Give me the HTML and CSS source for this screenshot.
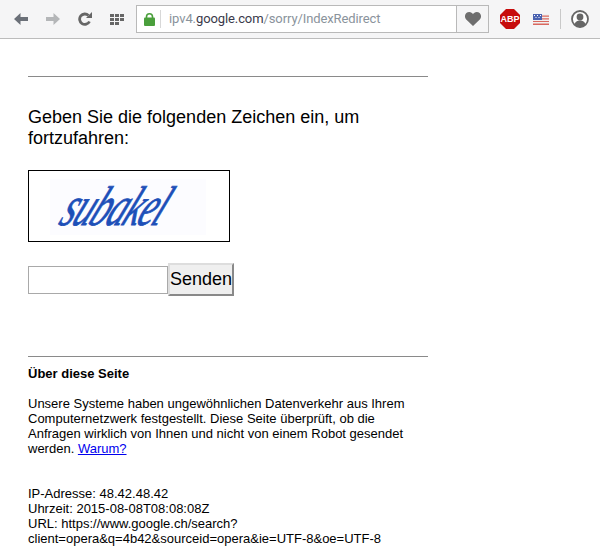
FILE: index.html
```html
<!DOCTYPE html>
<html lang="de">
<head>
  <meta charset="UTF-8">
  <title>Sorry</title>
  <link rel="stylesheet" href="styles.css">
</head>
<body>
  <header class="toolbar">
    <nav class="nav-icons">
      <svg width="14" height="12" viewBox="0 0 14 12"><path d="M6.500 0 0 6l6.500 6V8H14V4H6.500z" fill="#6b7078"/></svg>
      <svg width="14" height="12" viewBox="0 0 14 12"><path d="M7.500 0 14 6l-6.500 6V8H0V4h7.500z" fill="#b4b6b8"/></svg>
      <svg width="14" height="14" viewBox="0 0 14 14"><path d="M11.500 9.500A5.200 5.200 0 1 1 10.500 3.500" fill="none" stroke="#666" stroke-width="2.800"/><path d="M8 6h6V0z" fill="#666"/></svg>
      <svg width="14" height="11" viewBox="0 0 14 11" fill="#666"><path d="M0 0h4v3H0zM5 0h4v3H5zM10 0h4v3h-4zM0 4h4v3H0zM5 4h4v3H5zM10 4h4v3h-4zM0 8h4v3H0zM5 8h4v3H5z"/></svg>
    </nav>
    <div class="address">
      <svg class="lock" width="11" height="13" viewBox="0 0 11 13"><path d="M2.500 6V3.800a3 3 0 0 1 6 0V6" fill="none" stroke="#4a9f3c" stroke-width="1.600"/><rect y="4.500" width="11" height="8.500" rx="1" fill="#4a9f3c"/></svg>
      <span class="url"><span class="url-dim">ipv4.</span><span class="url-host">google.com</span><span class="url-dim">/sorry/IndexRedirect</span></span>
      <span class="heart-box">
        <svg width="16" height="14" viewBox="0 0 16 14"><path d="M8 14 1.200 7.500C-1.500 4.500.5 0 4.300 0 6 0 7.300 1 8 2.200 8.700 1 10 0 11.700 0c3.800 0 5.800 4.500 3.100 7.500z" fill="#6e6e6e"/></svg>
      </span>
    </div>
    <span class="abp">ABP</span>
    <svg class="flag" width="16" height="11" viewBox="0 0 16 11"><path d="M0 0h16v11H0z" fill="#f0f0f0"/><path d="M0 1.500h16v1.200H0zM0 4.200h16v1.200H0zM0 6.900h16v1.200H0zM0 9.600h16v1.400H0z" fill="#d9685f"/><path d="M0 0h9v6H0z" fill="#4a62b0"/><path d="M1 1.500h1M4 1.500h1M7 1.500h1M2.500 3.500h1M5.500 3.500h1" stroke="#fff" stroke-width="1"/></svg>
    <span class="divider"></span>
    <svg class="profile" width="18" height="18" viewBox="0 0 18 18"><circle cx="9" cy="9" r="8" fill="#fff" stroke="#666" stroke-width="1.800"/><circle cx="9" cy="7" r="3.400" fill="#666"/><path d="M3.500 15c.5-3.500 3-4.500 5.500-4.500s5 1 5.500 4.500a8 8 0 0 1-11 0z" fill="#666"/></svg>
  </header>

  <main class="content">
    <hr>
    <h1 class="prompt">Geben Sie die folgenden Zeichen ein, um fortzufahren:</h1>
    <div class="captcha">
      <div class="captcha-image"><span class="captcha-text">subakel</span></div>
    </div>
    <form class="captcha-form">
      <input type="text" class="captcha-input">
      <button type="button" class="send">Senden</button>
    </form>
    <hr class="about-rule">
    <p class="about-title">Über diese Seite</p>
    <p class="about-text">Unsere Systeme haben ungewöhnlichen Datenverkehr aus Ihrem Computernetzwerk festgestellt. Diese Seite überprüft, ob die Anfragen wirklich von Ihnen und nicht von einem Robot gesendet werden. <a href="#">Warum?</a></p>
    <p class="details">IP-Adresse: 48.42.48.42<br>Uhrzeit: 2015-08-08T08:08:08Z<br>URL: https://www.google.ch/search?<br>client=opera&amp;q=4b42&amp;sourceid=opera&amp;ie=UTF-8&amp;oe=UTF-8</p>
  </main>
</body>
</html>
```

FILE: styles.css
```css
body {
  margin: 0;
  font-family: "Liberation Sans", Arial, sans-serif;
  font-size: 13px;
  color: #000;
  background-color: #fff;
}

.toolbar {
  display: flex;
  align-items: center;
  height: 38px;
  padding-left: 14px;
  background-color: #f5f5f6;
  border-bottom: 1px solid #bcbcbc;
}

.nav-icons {
  display: flex;
  align-items: center;
  gap: 18px;
  margin-right: 12px;
}

.address {
  display: flex;
  align-items: center;
  box-sizing: border-box;
  width: 353px;
  height: 28px;
  background-color: #fff;
  border: 1px solid #b9b9b9;
}

.lock {
  margin-left: 7px;
}

.url {
  flex: 1;
  margin-left: 5px;
  padding-left: 8px;
  border-left: 1px solid #d8d8d8;
  font-family: Roboto, sans-serif;
  font-size: 13px;
  letter-spacing: -.1px;
  line-height: 18px;
}

.url-dim {
  color: #8a939c;
}

.url-host {
  color: #3a3a4a;
}

.heart-box {
  display: flex;
  align-items: center;
  justify-content: center;
  width: 31px;
  height: 26px;
  background-color: #f5f5f6;
  border-left: 1px solid #b9b9b9;
}

.abp {
  display: block;
  width: 20px;
  height: 20px;
  margin-left: 11px;
  clip-path: polygon(30% 0, 70% 0, 100% 30%, 100% 70%, 70% 100%, 30% 100%, 0 70%, 0 30%);
  background-color: #c70d0d;
  color: #fff;
  font-size: 9px;
  font-weight: bold;
  line-height: 20px;
  text-align: center;
}

.flag {
  margin-left: 13px;
}

.divider {
  width: 1px;
  height: 20px;
  margin-left: 11px;
  background-color: #c9c9c9;
}

.profile {
  margin-left: 10px;
}

.content {
  width: 400px;
  padding-left: 28px;
}

hr {
  height: 0;
  margin: 0;
  border: 0;
  border-top: 1px solid #8a8a8a;
}

.content > hr:first-child {
  margin-top: 37px;
}

.prompt {
  margin: 30px 0 0;
  font-size: 18px;
  font-weight: normal;
  line-height: 21px;
}

.captcha {
  width: 200px;
  height: 70px;
  margin-top: 21px;
  border: 1px solid #000;
}

.captcha-image {
  display: flex;
  align-items: center;
  width: 156px;
  height: 56px;
  margin: 8px 0 0 21px;
  background-color: #fcfcff;
}

/* captcha picture: stretched and slanted like the distorted original */
.captcha-text {
  margin-left: 16px;
  font-family: "Liberation Serif", serif;
  font-style: italic;
  font-size: 28px;
  line-height: 56px;
  letter-spacing: -1px;
  color: #1d4fb8;
  -webkit-text-stroke: .4px #1d4fb8;
  transform: skewX(-26deg) scale(1.28, 2);
  transform-origin: left center;
}

.captcha-form {
  display: flex;
  align-items: center;
  margin-top: 21px;
}

.captcha-input {
  box-sizing: border-box;
  width: 140px;
  height: 28px;
  margin: 0;
  border: 1px solid #a9a9a9;
  padding: 0;
}

.send {
  box-sizing: border-box;
  width: 66px;
  height: 33px;
  padding: 0;
  background-color: #efefef;
  border: 2px outset #ddd;
  font-family: "Liberation Sans", Arial, sans-serif;
  font-size: 18px;
}

.about-rule {
  margin-top: 60px;
}

.about-title {
  margin: 9px 0 0;
  font-weight: bold;
  line-height: 16px;
}

.about-text {
  margin: 14px 0 0;
  line-height: 15px;
}

.details {
  margin: 30px 0 0;
  line-height: 15px;
}
```
